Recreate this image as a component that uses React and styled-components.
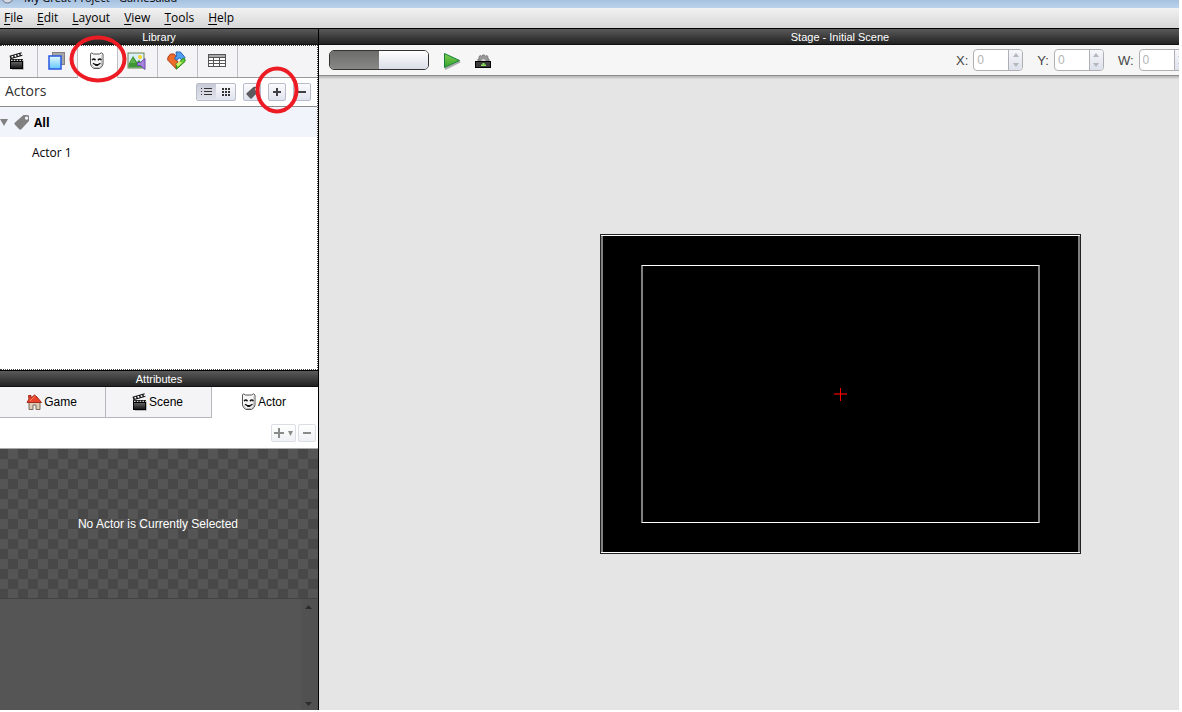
import { useState } from "react";
import styled, { createGlobalStyle, css } from "styled-components";

const menus = ["File", "Edit", "Layout", "View", "Tools", "Help"];

export default function App(){

    const [tab, setTab] = useState("actors");
    const [attr, setAttr] = useState("Actor");

    return<Window>
        <GlobalStyle />
        <TitleBar>
            <AppIcon />
            <TitleText>My Great Project - GameSalad</TitleText>
        </TitleBar>

        <MenuBar>
            {menus.map((m)=><MenuItem key={m}><u>{m[0]}</u>{m.slice(1)}</MenuItem>)}
        </MenuBar>

        <Main>
            <Side>
                <PanelHead>Library</PanelHead>
                <Library>
                    <LibTabs>
                        {libTabs.map(({id, label, Icon})=>
                            <LibTab key={id} aria-label={label} $on={tab === id} onClick={()=>setTab(id)}>
                                <Icon />
                                {id === "actors" && <Ring $w={57} $h={47} />}
                            </LibTab>
                        )}
                    </LibTabs>
                    <ListHead>
                        <ListTitle>Actors</ListTitle>
                        <Segment>
                            <SegBtn aria-label="List view" $on><ListIcon /></SegBtn>
                            <SegBtn aria-label="Grid view"><GridIcon /></SegBtn>
                        </Segment>
                        <SmallBtn aria-label="Edit tags"><TagIcon size={13} color="#5c5c60" /></SmallBtn>
                        <SmallBtn aria-label="Add actor">
                            <PlusIcon />
                            <Ring $w={43} $h={47} />
                        </SmallBtn>
                        <SmallBtn aria-label="Remove actor"><MinusIcon /></SmallBtn>
                    </ListHead>
                    <AllRow>
                        <DownIcon />
                        <TagIcon size={16} color="#808080" />
                        All
                    </AllRow>
                    <ActorRow>Actor 1</ActorRow>
                </Library>

                <PanelHead>Attributes</PanelHead>
                <AttrTabs>
                    {attrTabs.map(({label, Icon})=>
                        <AttrTab key={label} $on={attr === label} onClick={()=>setAttr(label)}>
                            <Icon />{label}
                        </AttrTab>
                    )}
                </AttrTabs>
                <AttrTools>
                    <FaintBtn aria-label="Add attribute" $wide><PlusIcon color="#8a8a8a" big /><SmallDown /></FaintBtn>
                    <FaintBtn aria-label="Remove attribute"><MinusIcon color="#8a8a8a" /></FaintBtn>
                </AttrTools>
                <Checker>No Actor is Currently Selected</Checker>
                <Empty>
                    <ScrollTrack>
                        <svg width="7" height="4"><path d="M0 4 L3.5 0 L7 4Z" fill="#2c2c2c" /></svg>
                        <svg width="7" height="4"><path d="M0 0 L3.5 4 L7 0Z" fill="#2c2c2c" /></svg>
                    </ScrollTrack>
                </Empty>
            </Side>

            <StagePanel>
                <PanelHead $shift>Stage - Initial Scene</PanelHead>
                <StageBar>
                    <Toggle>
                        <ToggleHalf aria-label="Initial" $on />
                        <ToggleHalf aria-label="Layers" />
                    </Toggle>
                    <IconBtn aria-label="Play"><PlayIcon /></IconBtn>
                    <IconBtn aria-label="Preview"><PreviewIcon /></IconBtn>
                    <Fields>
                        {["X", "Y", "W"].map((f)=><Field key={f}>
                            {f}:
                            <NumBox>
                                <NumInput type="text" defaultValue="0" />
                                <Steps>
                                    <Step aria-label={f + " up"}><svg width="6" height="4"><path d="M0 4 L3 0 L6 4Z" fill="#b4b6bc" /></svg></Step>
                                    <Step aria-label={f + " down"}><svg width="6" height="4"><path d="M0 0 L3 4 L6 0Z" fill="#b4b6bc" /></svg></Step>
                                </Steps>
                            </NumBox>
                        </Field>)}
                    </Fields>
                </StageBar>
                <Canvas>
                    <Scene>
                        <Camera>
                            <svg width="13" height="13">
                                <path d="M0 6H13" stroke="#900000" strokeWidth="2" />
                                <path d="M6.5 0V13" stroke="#ff0000" />
                            </svg>
                        </Camera>
                    </Scene>
                </Canvas>
            </StagePanel>
        </Main>
    </Window>
}

//icons
function AppIcon(){
    return<svg width="13" height="13" viewBox="0 0 13 13">
        <circle cx="6.5" cy="6.5" r="5.5" fill="#d4d8e2" stroke="#6d7180" />
        <path d="M4 4v5M6.5 4v5M9 4v5" stroke="#555a6a" />
    </svg>
}

function Clapper(){
    return<svg width="16" height="18" viewBox="0 0 16 18">
        <defs><linearGradient id="clap" x2="0" y2="1"><stop stopColor="#666" /><stop offset="1" stopColor="#111" /></linearGradient></defs>
        <path d="M1 5.5 L13 2" stroke="#111" strokeWidth="3.6" />
        <path d="M2.5 5 L13 2" stroke="#fff" strokeWidth="1.8" strokeDasharray="1.8 1.4" />
        <rect x="1" y="7" width="13" height="2.5" fill="#111" />
        <path d="M2 8.3h12" stroke="#fff" strokeDasharray="1.6 1.2" />
        <rect x="1.5" y="9.5" width="12" height="7" fill="url(#clap)" stroke="#000" />
        <path d="M3 17.5h11.5v-9" stroke="#bbb" fill="none" />
    </svg>
}

function Layers(){
    return<svg width="18" height="18" viewBox="0 0 18 18">
        <defs><linearGradient id="lay" x2="0" y2="1"><stop stopColor="#e4f8ff" /><stop offset="1" stopColor="#62c8fb" /></linearGradient></defs>
        <rect x="4.5" y=".5" width="12" height="12" fill="#a6a6a6" stroke="#808080" />
        <rect x="1" y="4" width="12" height="13" fill="url(#lay)" stroke="#2757e0" strokeWidth="1.5" />
    </svg>
}

function Mask(){
    return<svg width="16" height="18" viewBox="0 0 16 18">
        <path d="M2.5 .8 L4.5 2 H10.500 L12.500 .8 L14 2 V12 L13 14.5 L10.5 16.5 H5 L2.500 14.5 L1.5 12 V2Z" fill="#f6f6f6" stroke="#555" />
        <path d="M2.5 12 L3.5 14 L5.5 15.5 H10 L12.500 13.500 L13 3" stroke="#bdbdbd" fill="none" />
        <path d="M3.2 8.2 Q4.700 6 6.500 8.2M9 8.2Q10.800 6 12.300 8.2" stroke="#111" strokeWidth="1.5" fill="none" />
        <path d="M4 11.200 Q7.750 14.500 11.500 11.200" stroke="#111" strokeWidth="1.2" fill="none" />
        <path d="M5.500 12 H10 L9 14 H6.500Z" fill="#111" />
    </svg>
}

function Media(){
    return<svg width="19" height="18" viewBox="0 0 19 18">
        <rect x="1" y="1" width="16" height="15" fill="#d9f0f8" stroke="#6b7f52" />
        <circle cx="13" cy="5" r="2" fill="#ffd42a" />
        <path d="M1.5 12 L6 4 L10 10 L12 8 L16.5 13 V15.5 H1.5Z" fill="#3f9434" />
        <path d="M3 11 L6 6 L9 11Z" fill="#62b24c" />
        <path d="M10.5 10.5h3l4.5-4v11l-4.500-4h-3Z" fill="#a582dc" stroke="#6d48ad" />
    </svg>
}

function Behaviors(){
    return<svg width="19" height="19" viewBox="0 0 19 19">
        <path d="M3.5 3 H7 L10 6.500 L8 8.500 L11 10.500 L9.5 13 L9.300 18 L.7 9 L1 6Z" fill="#ef6b2b" stroke="#a83b13" />
        <path d="M9 1 H13.500 L18 6.500 L15.500 9.500 L12.500 7 L9.5 9 L7.500 7.300 L9.5 5Z" fill="#4e9ff0" stroke="#2560b5" />
        <path d="M18 8 V10.500 L9.5 18.2 L9 12.500 L11.5 12.5 L15.5 7.5Z" fill="#62cb36" stroke="#2f8420" />
        <path d="M9 13l4-2.5 2 1-4 4Z" fill="#d8f26a" />
    </svg>
}

function TableIcon(){
    return<svg width="18" height="14" viewBox="0 0 18 14">
        <rect x=".5" y=".5" width="17" height="12" fill="#fff" stroke="#555" />
        <path d="M1 2h16" stroke="#a8a8a8" strokeWidth="2" />
        <path d="M1 3.5h16M1 6.5h16M1 9.5h16M5.5 4v9M11.5 4v9" stroke="#555" />
    </svg>
}

function House(){
    return<svg width="17" height="17" viewBox="0 0 17 17">
        <path d="M3 8 V15.5 H7 V11 H10 V15.5 H14 V8 L8.5 3Z" fill="#ddcbb3" stroke="#78695a" />
        <path d="M2.500 1.5H5V4L8.5 1L11 3L15.500 8.5H1L3 5Z" fill="#e8442c" stroke="#a32a1c" />
        <path d="M8.5 2.500L4 7" stroke="#ff8468" />
    </svg>
}

function TagIcon({size, color}){
    return<svg width={size} height={size} viewBox="0 0 16 16">
        <path fillRule="evenodd" d="M9.5 1 H14 L15 2 V7 L7 15.5 Q6 16 5 15 L.7 10.5 Q0 9.5 .7 8.8Z M12.5 2.5a1.6 1.6 0 1 0 .1 0Z" fill={color} />
    </svg>
}

function ListIcon(){
    return<svg width="11" height="8"><path d="M0 .5h1M0 3.5h1M0 6.5h1M3 .5h8M3 3.5h8M3 6.5h8" stroke="#333" /></svg>
}

function GridIcon(){
    return<svg width="8" height="8"><path d="M0 1h8M0 4h8M0 7h8" stroke="#333" strokeWidth="2" strokeDasharray="2 1" /></svg>
}

function PlusIcon({color = "#404045", big}){
    const s = big ? 10 : 8;
    return<svg width={s} height={s}><path d={`M0 ${s / 2}H${s}M${s / 2} 0V${s}`} stroke={color} strokeWidth="2" /></svg>
}

function MinusIcon({color = "#404045"}){
    return<svg width="8" height="2"><rect width="8" height="2" fill={color} /></svg>
}

function DownIcon(){
    return<svg width="8" height="7"><path d="M0 0H8L4 7Z" fill="#808080" /></svg>
}

function SmallDown(){
    return<svg width="5" height="5"><path d="M0 0H5L2.5 5Z" fill="#8a8a8a" /></svg>
}

function PlayIcon(){
    return<svg width="18" height="18" viewBox="0 0 18 18">
        <defs><linearGradient id="play" x2="0" y2="1"><stop stopColor="#7ccf4e" /><stop offset="1" stopColor="#37a02e" /></linearGradient></defs>
        <path d="M2 17 L17 9.5" stroke="#aaa" strokeWidth="2" />
        <path d="M1.500 1.5 L16.500 8.5 L1.500 15.5Z" fill="url(#play)" stroke="#14803a" strokeLinejoin="round" />
    </svg>
}

function PreviewIcon(){
    return<svg width="17" height="16" viewBox="0 0 17 16">
        <path d="M3 8V6l1.500-.5L4 3.500l1.500-1 1.200 1 .8-1.500h2l.8 1.500 1.200-1 1.500 1-.5 2L14 6v2Z" fill="#999" stroke="#7c7c7c" />
        <path d="M6 8Q8.500 4 11 8Z" fill="#d8d8d8" />
        <rect x=".5" y="8.5" width="15" height="6" fill="#3b3b3b" stroke="#000" />
        <path d="M6 13h5v-1.500H9.500V10h-2v1.500H6Z" fill="#8be05a" />
    </svg>
}

const libTabs = [
    {id:"scenes", label:"Scenes", Icon:Clapper},
    {id:"layers", label:"Layers", Icon:Layers},
    {id:"actors", label:"Actors", Icon:Mask},
    {id:"media", label:"Media", Icon:Media},
    {id:"behaviors", label:"Behaviors", Icon:Behaviors},
    {id:"tables", label:"Tables", Icon:TableIcon},
];

const attrTabs = [
    {label:"Game", Icon:House},
    {label:"Scene", Icon:Clapper},
    {label:"Actor", Icon:Mask},
];

const GlobalStyle = createGlobalStyle`
*{box-sizing:border-box;}
body{
margin:0;
background:#FFF;
font-family:"Liberation Sans", Arial, sans-serif;
font-size:12px;
}
button{
font:inherit;
color:inherit;
padding:0;
border:none;
background:none;
}
svg{display:block; flex:none;}
`;

const ui = css`
font-family:"Open Sans", "Noto Sans", sans-serif;
`;

//leaves the thin white edge at the right and bottom
const Window = styled.div`
display:flex;
flex-direction:column;
min-height:calc(100vh - 2px);
margin:0 3px 2px 0;
`;

const TitleBar = styled.header`
${ui}
display:flex;
align-items:flex-end;
gap:10px;
height:8px;
padding:0 0 4px 1px;
overflow:hidden;
background:linear-gradient(#a6c1e0, #bcd3ec);
`;

const TitleText = styled.span`
font-size:11px;
line-height:12px;
white-space:nowrap;
`;

const MenuBar = styled.nav`
${ui}
display:flex;
align-items:center;
gap:14px;
height:20px;
padding-left:4px;
background:linear-gradient(#f2f2f2, #d6d6d6);
`;

const MenuItem = styled.button`
line-height:20px;
u{text-underline-offset:2px;}
`;

const Main = styled.main`
display:flex;
flex:1;
`;

const Side = styled.aside`
display:flex;
flex-direction:column;
flex:0 0 319px;
border-right:1px solid #000;
`;

const PanelHead = styled.h2`
height:17px;
margin:0;
padding-left:${p=>p.$shift ? "182px" : "0"};
border-top:1px solid #000;
border-bottom:1px solid #111;
background:linear-gradient(#5a5a5a, #222);
color:#FFF;
font-size:11px;
font-weight:400;
line-height:16px;
text-align:center;
`;

const Library = styled.section`
flex:1;
border:1px dotted #444;
border-left:none;
background:#FFF;
`;

const LibTabs = styled.div`
display:flex;
height:32px;
margin-left:-2px;
border-bottom:1px solid #9a9a9a;
background:#f4f4f6;
`;

const LibTab = styled.button`
position:relative;
display:flex;
justify-content:center;
align-items:center;
width:40px;
height:${p=>p.$on ? "32px" : "31px"};
padding:0 2px 2px 0;
border-right:1px solid #c0c0c4;
background:${p=>p.$on ? "#FFF" : "#f4f4f6"};
`;

//hand drawn style marker lying over a control
const Ring = styled.span`
position:absolute;
top:40%;
left:50%;
z-index:2;
width:${p=>p.$w}px;
height:${p=>p.$h}px;
border:4px solid #ed1c24;
border-radius:50%;
transform:translate(-50%, -50%);
pointer-events:none;
`;

const ListHead = styled.div`
display:flex;
align-items:center;
gap:7px;
height:29px;
padding:0 6px 0 5px;
border-bottom:1px solid #8c8c8c;
`;

const ListTitle = styled.h3`
${ui}
flex:1;
margin:0;
padding-bottom:4px;
color:#333;
font-size:14px;
font-weight:400;
`;

const box = css`
border:1px solid #b9bdcb;
border-radius:2px;
background:linear-gradient(#fbfbfd, #dfe3ee);
`;

const Segment = styled.div`
${box}
display:flex;
width:40px;
height:18px;
`;

const SegBtn = styled.button`
display:flex;
flex:1;
justify-content:center;
align-items:center;
background:${p=>p.$on ? "linear-gradient(#c9ccd8, #e2e4ec)" : "none"};
`;

const SmallBtn = styled.button`
${box}
position:relative;
display:flex;
justify-content:center;
align-items:center;
width:18px;
height:18px;
`;

const AllRow = styled.div`
${ui}
display:flex;
align-items:center;
height:30px;
background:#f1f5fb;
font-weight:700;
svg + svg{margin:0 4px 0 6px;}
`;

const ActorRow = styled.div`
${ui}
height:30px;
padding-left:32px;
line-height:32px;
`;

const AttrTabs = styled.div`
display:grid;
grid-template-columns:repeat(3, 1fr);
height:31px;
`;

const AttrTab = styled.button`
display:flex;
justify-content:center;
align-items:center;
gap:1px;
padding-right:2px;
border:solid ${p=>p.$on ? "#FFF" : "#b8b8bc"};
border-width:0 1px 1px 0;
background:${p=>p.$on ? "#FFF" : "#f4f4f6"};
`;

const AttrTools = styled.div`
display:flex;
justify-content:flex-end;
align-items:center;
gap:2px;
height:31px;
padding-right:2px;
border-bottom:1px solid #aaa;
background:#FFF;
`;

const FaintBtn = styled.button`
display:flex;
justify-content:center;
align-items:center;
gap:4px;
width:${p=>p.$wide ? "25px" : "18px"};
height:18px;
border:1px solid #dcdee5;
border-radius:2px;
background:linear-gradient(#FFF, #f0f1f5);
`;

const Checker = styled.div`
display:flex;
justify-content:center;
align-items:center;
height:150px;
padding-right:2px;
border-bottom:1px solid #434343;
background:conic-gradient(#555 25%, #484848 0 50%, #555 0 75%, #484848 0) -2px 0 / 20px 20px;
color:#FFF;
`;

const Empty = styled.div`
display:flex;
justify-content:flex-end;
height:111px;
background:#555;
`;

const ScrollTrack = styled.div`
display:flex;
flex-direction:column;
justify-content:space-between;
align-items:center;
width:17px;
padding:6px 2px 4px 0;
background:#515151;
`;

const StagePanel = styled.section`
display:flex;
flex-direction:column;
flex:1;
min-width:0;
`;

const StageBar = styled.div`
display:flex;
align-items:center;
gap:14px;
height:31px;
padding-left:10px;
border-bottom:1px solid #8c8c8c;
background:#f6f6f6;
`;

const Toggle = styled.div`
display:flex;
width:100px;
height:20px;
overflow:hidden;
border:1px solid #333;
border-radius:5px;
`;

const ToggleHalf = styled.button`
flex:1;
background:${p=>p.$on ? "linear-gradient(#6c6c6a, #888886)" : "linear-gradient(#FFF, #dadde8)"};
`;

const IconBtn = styled.button`
padding-top:2px;
`;

//the strip runs on past the window edge
const Fields = styled.div`
display:flex;
gap:14px;
width:223px;
margin-left:auto;
overflow:hidden;
`;

const Field = styled.label`
display:flex;
flex:none;
align-items:center;
gap:5px;
color:#444;
font-size:13px;
`;

const NumBox = styled.span`
display:flex;
width:50px;
height:22px;
overflow:hidden;
border:1px solid #b0b0b4;
border-radius:4px;
background:#FFF;
font-size:12px;
`;

const NumInput = styled.input`
flex:1;
min-width:0;
padding:0 3px;
border:none;
background:none;
color:#b4b4b4;
font:inherit;
`;

const Steps = styled.span`
display:flex;
flex-direction:column;
width:14px;
border-left:1px solid #b0b0b4;
background:linear-gradient(#f6f7fb, #dde1ec);
`;

const Step = styled.button`
display:flex;
flex:1;
justify-content:center;
align-items:center;
`;

const Canvas = styled.div`
display:flex;
flex:1;
justify-content:center;
align-items:center;
padding:2px 0 0 182px;
background:#e5e5e5;
box-shadow:inset 0 3px 2px -1px #bbb;
`;

const Scene = styled.div`
display:flex;
justify-content:center;
align-items:center;
width:481px;
height:320px;
border:1px solid #222;
background:#000;
box-shadow:inset 0 1px #FFF, inset 0 -1px #FFF, inset 2px 0 #808080, inset -2px 0 #808080;
`;

const Camera = styled.div`
display:flex;
justify-content:center;
align-items:center;
width:399px;
height:258px;
border:solid;
border-width:1px 2px;
border-color:#FFF #808080;
`;
